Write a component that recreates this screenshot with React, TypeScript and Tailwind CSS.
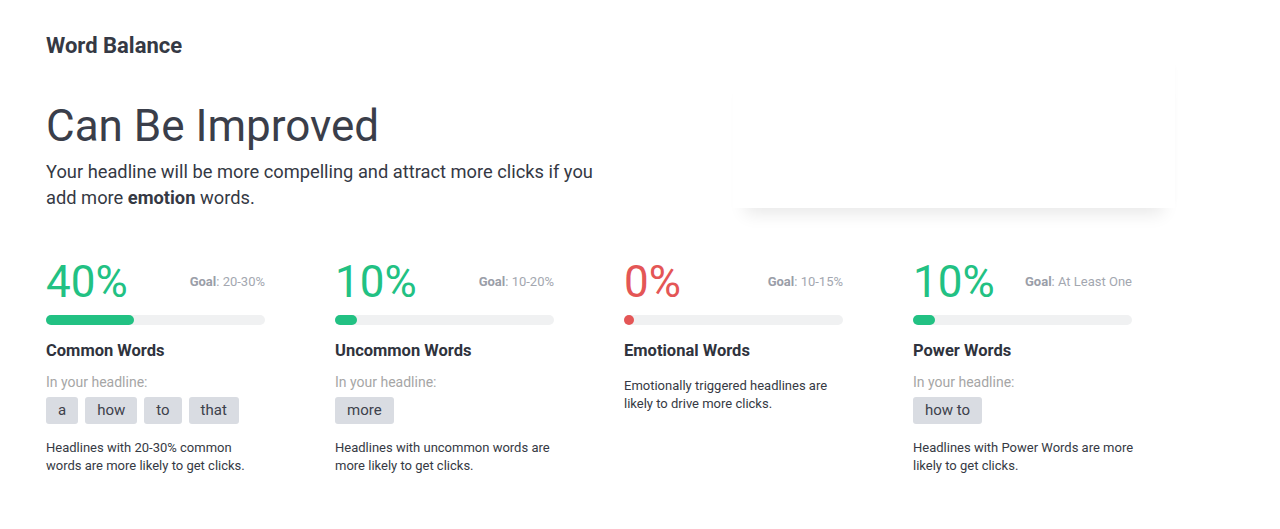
import React from "react";

type Col = {
  pct: number;
  color: string;
  goal: string;
  title: string;
  tags?: string[];
  desc: string[];
};

const cols: Col[] = [
  { pct: 40, color: "green", goal: "20-30%", title: "Common Words", tags: ["a", "how", "to", "that"], desc: ["Headlines with 20-30% common", "words are more likely to get clicks."] },
  { pct: 10, color: "green", goal: "10-20%", title: "Uncommon Words", tags: ["more"], desc: ["Headlines with uncommon words are", "more likely to get clicks."] },
  { pct: 0, color: "red", goal: "10-15%", title: "Emotional Words", desc: ["Emotionally triggered headlines are", "likely to drive more clicks."] },
  { pct: 10, color: "green", goal: "At Least One", title: "Power Words", tags: ["how to"], desc: ["Headlines with Power Words are more", "likely to get clicks."] },
];

function Desc({ lines, mt }: { lines: string[]; mt: string }) {
  return (
    <div className={mt + " whitespace-nowrap text-[13px] leading-[18px] text-[#363a44]"}>
      {lines.map((d) => (
        <div key={d}>{d}</div>
      ))}
    </div>
  );
}

function Column({ c }: { c: Col }) {
  const isRed = c.color === "red";
  return (
    <div className="w-[219px]">
      <div className="flex items-start justify-between">
        <div className={"text-[44px] leading-[44px] font-normal " + (isRed ? "text-[#e45656]" : "text-[#22c183]")}>
          {c.pct}%
        </div>
        <div className="mt-[12px] whitespace-nowrap text-[13px] leading-[20px] text-[#a3a7b0]">
          <span className="font-bold text-[#9a9ea8]">Goal</span>: {c.goal}
        </div>
      </div>
      <div className="mt-[11px] h-[10px] w-full rounded-full bg-[#f0f1f2]">
        {c.pct > 0 ? (
          <div className="h-[10px] rounded-full bg-[#22c183]" style={{ width: `${c.pct}%` }} />
        ) : (
          <div className="h-[10px] w-[10px] rounded-full bg-[#e45656]" />
        )}
      </div>
      <div className="mt-[14px] text-[16.5px] leading-[24px] font-bold text-[#2f333d]">{c.title}</div>
      {c.tags ? (
        <>
          <div className="mt-[8px] text-[14px] leading-[22px] text-[#a6a6a6]">In your headline:</div>
          <div className="mt-[4px] flex gap-[7px]">
            {c.tags.map((t) => (
              <span key={t} className="h-[27px] rounded-[3px] bg-[#d9dce2] px-3 text-[15px] leading-[27px] text-[#3d414b]">
                {t}
              </span>
            ))}
          </div>
          <Desc lines={c.desc} mt="mt-[15px]" />
        </>
      ) : (
        <Desc lines={c.desc} mt="mt-[14px]" />
      )}
    </div>
  );
}

export default function App() {
  return (
    <div className="min-h-[529px] bg-white px-[46px] pt-[31px] font-['Roboto',sans-serif]">
      <div className="text-[22px] leading-[30px] font-bold text-[#353944]">Word Balance</div>
      <div className="flex">
        <div className="w-[580px]">
          <h1 className="mt-[38px] text-[44px] leading-[55px] font-normal text-[#3a3e4a]">Can Be Improved</h1>
          <p className="mt-[5px] text-[18.3px] leading-[26px] text-[#353944]">
            Your headline will be more compelling and attract more clicks if you add more <b className="font-bold">emotion</b> words.
          </p>
        </div>
        <div className="mb-[3px] ml-auto mr-[59px] w-[442px] self-stretch bg-white shadow-[0_18px_16px_-12px_rgba(0,0,0,0.09),4px_0_6px_-5px_rgba(0,0,0,0.03)]" />
      </div>
      <div className="mt-[49px] grid grid-cols-[repeat(4,289px)]">
        {cols.map((c) => (
          <Column key={c.title} c={c} />
        ))}
      </div>
    </div>
  );
}
